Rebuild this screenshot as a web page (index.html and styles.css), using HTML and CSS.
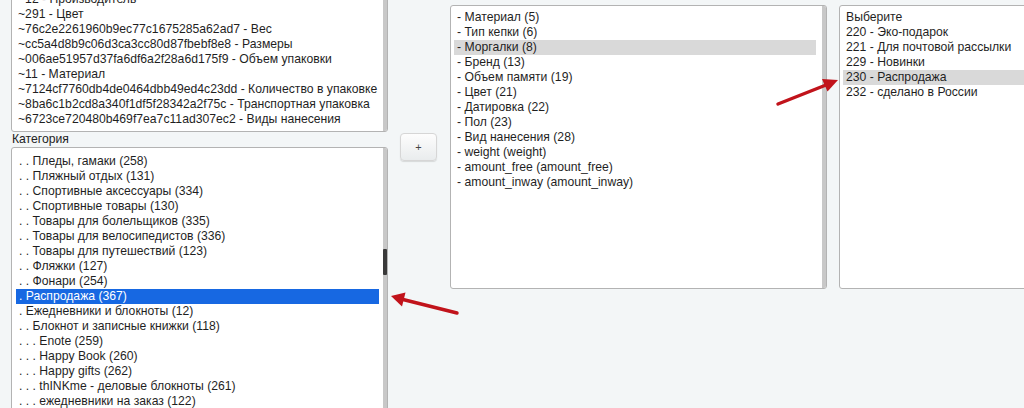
FILE: index.html
```html
<!DOCTYPE html>
<html lang="ru">
<head>
<meta charset="utf-8">
<title>Свойства</title>
<link rel="stylesheet" href="styles.css">
</head>
<body>
<div class="page">
  <div class="col-left">
    <div class="box box-props">
      <ul class="list">
        <li>~12 - Производитель</li>
        <li>~291 - Цвет</li>
        <li>~76c2e2261960b9ec77c1675285a62ad7 - Вес</li>
        <li>~cc5a4d8b9c06d3ca3cc80d87fbebf8e8 - Размеры</li>
        <li>~006ae51957d37fa6df6a2f28a6d175f9 - Объем упаковки</li>
        <li>~11 - Материал</li>
        <li>~7124cf7760db4de0464dbb49ed4c23dd - Количество в упаковке</li>
        <li>~8ba6c1b2cd8a340f1df5f28342a2f75c - Транспортная упаковка</li>
        <li>~6723ce720480b469f7ea7c11ad307ec2 - Виды нанесения</li>
      </ul>
      <div class="track"></div>
    </div>
    <div class="label">Категория</div>
    <div class="box box-cat">
      <ul class="list">
        <li>. . Пледы, гамаки (258)</li>
        <li>. . Пляжный отдых (131)</li>
        <li>. . Спортивные аксессуары (334)</li>
        <li>. . Спортивные товары (130)</li>
        <li>. . Товары для болельщиков (335)</li>
        <li>. . Товары для велосипедистов (336)</li>
        <li>. . Товары для путешествий (123)</li>
        <li>. . Фляжки (127)</li>
        <li>. . Фонари (254)</li>
        <li class="sel-blue">. Распродажа (367)</li>
        <li>. Ежедневники и блокноты (12)</li>
        <li>. . Блокнот и записные книжки (118)</li>
        <li>. . . Enote (259)</li>
        <li>. . . Happy Book (260)</li>
        <li>. . . Happy gifts (262)</li>
        <li>. . . thINKme - деловые блокноты (261)</li>
        <li>. . . ежедневники на заказ (122)</li>
      </ul>
      <div class="track"><div class="thumb"></div></div>
    </div>
  </div>
  <div class="col-btn">
    <button class="btn-add" type="button">+</button>
  </div>
  <div class="box box-mid">
    <ul class="list">
      <li>- Материал (5)</li>
      <li>- Тип кепки (6)</li>
      <li class="sel-grey">- Моргалки (8)</li>
      <li>- Бренд (13)</li>
      <li>- Объем памяти (19)</li>
      <li>- Цвет (21)</li>
      <li>- Датировка (22)</li>
      <li>- Пол (23)</li>
      <li>- Вид нанесения (28)</li>
      <li>- weight (weight)</li>
      <li>- amount_free (amount_free)</li>
      <li>- amount_inway (amount_inway)</li>
    </ul>
    <div class="track"></div>
  </div>
  <div class="box box-right">
    <ul class="list">
      <li>Выберите</li>
      <li>220 - Эко-подарок</li>
      <li>221 - Для почтовой рассылки</li>
      <li>229 - Новинки</li>
      <li class="sel-grey">230 - Распродажа</li>
      <li>232 - сделано в России</li>
    </ul>
  </div>
</div>
<svg class="arrows" width="1024" height="408" viewBox="0 0 1024 408" aria-hidden="true">
  <line x1="457" y1="313" x2="401" y2="299" stroke="#c1131b" stroke-width="3.4" stroke-linecap="round"/>
  <polygon points="391,296 405.5,292.5 402,306.5" fill="#c1131b"/>
  <line x1="778" y1="104" x2="826" y2="85" stroke="#c1131b" stroke-width="3.4" stroke-linecap="round"/>
  <polygon points="838,80 822,79 827.5,91.5" fill="#c1131b"/>
</svg>
</body>
</html>
```

FILE: styles.css
```css
html, body {
  margin: 0;
  padding: 0;
}
body {
  width: 1024px;
  height: 408px;
  overflow: hidden;
  background: #f3f6f7;
  font-family: "Liberation Sans", Arial, sans-serif;
  font-size: 12.2px;
  color: #1f1f1f;
  position: relative;
}
.page {
  display: flex;
  align-items: flex-start;
  padding-left: 11px;
}
.col-left {
  width: 377px;
  flex: none;
  display: flex;
  flex-direction: column;
  margin-top: -13px;
}
.box {
  background: #fff;
  border: 1px solid #b3b3b3;
  border-radius: 3px;
  box-sizing: border-box;
  display: flex;
  overflow: hidden;
  flex: none;
}
.list {
  list-style: none;
  margin: 0;
  flex: 1;
  min-width: 0;
  line-height: 15px;
}
.list li {
  white-space: nowrap;
  overflow: hidden;
  padding-left: 3px;
}
.track {
  width: 4px;
  flex: none;
  background: #c8c8c8;
  position: relative;
}
.thumb {
  position: absolute;
  left: 0;
  right: 0;
  top: 101px;
  height: 26px;
  background: #3a3a3a;
  border-radius: 1px;
}
.box-props {
  height: 145px;
}
.box-props .list {
  padding: 4px 0 0 3px;
}
.label {
  height: 15px;
  line-height: 15px;
  padding-left: 1px;
  margin-top: 0;
  color: #222;
}
.box-cat {
  height: 280px;
}
.box-cat .list {
  padding: 6px 4px 0 4px;
}
.sel-blue {
  background: #1768e2;
  color: #fff;
}
.sel-grey {
  background: #d9d9d9;
}
.col-btn {
  flex: none;
  margin-left: 12px;
  margin-top: 133px;
}
.btn-add {
  width: 37px;
  height: 28px;
  border: 1px solid #d6d6d6;
  border-radius: 4px;
  background: linear-gradient(#fdfdfd, #e9eced);
  box-shadow: 0 1px 1px rgba(0, 0, 0, 0.12);
  font-family: "Liberation Sans", Arial, sans-serif;
  font-size: 11px;
  color: #444;
  padding: 0;
  line-height: 26px;
}
.box-mid {
  margin-left: 13px;
  margin-top: 5px;
  width: 377px;
  height: 284px;
}
.box-mid .list {
  padding: 4px 6px 0 3px;
}
.box-right {
  margin-left: 12px;
  margin-top: 5px;
  width: 220px;
  height: 284px;
}
.box-right .list {
  padding: 4px 0 0 3px;
}
.arrows {
  position: absolute;
  left: 0;
  top: 0;
  pointer-events: none;
}
```
